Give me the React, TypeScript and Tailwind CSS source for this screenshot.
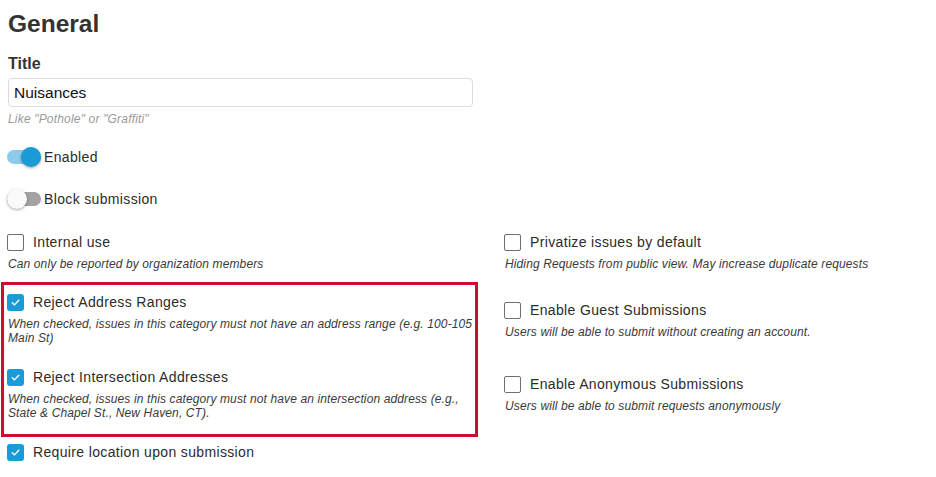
import React from 'react';

const font = { fontFamily: '"Liberation Sans", Arial, sans-serif' };

function Toggle({ on }: { on: boolean }) {
  return (
    <div className="relative w-[34px] h-[20px] shrink-0 flex items-center">
      <div className={`w-[34px] h-[14px] rounded-full ${on ? 'bg-[#8ccbea]' : 'bg-[#a3a3a3]'}`} />
      <div
        className={`absolute top-0 w-[20px] h-[20px] rounded-full shadow-[0_1px_3px_rgba(0,0,0,0.35)] ${
          on ? 'left-[14px] bg-[#1a9ad6]' : 'left-0 bg-[#fafafa]'
        }`}
      />
    </div>
  );
}

function Box({ checked }: { checked: boolean }) {
  if (checked) {
    return (
      <div className="w-[17px] h-[17px] rounded-[3px] bg-[#1a9ad6] flex items-center justify-center shrink-0">
        <svg width="11" height="11" viewBox="0 0 12 12" fill="none">
          <path d="M2.5 6.3 L4.9 8.6 L9.6 3.6" stroke="white" strokeWidth="1.5" strokeLinecap="round" strokeLinejoin="round" />
        </svg>
      </div>
    );
  }
  return <div className="w-[17px] h-[17px] rounded-[2px] border-[1.5px] border-[#6f6f6f] bg-white shrink-0" />;
}

function Option({
  label,
  desc,
  checked = false,
  className = '',
}: {
  label: string;
  desc?: React.ReactNode;
  checked?: boolean;
  className?: string;
}) {
  return (
    <div className={className}>
      <div className="h-[18px] flex items-center -ml-[1px]">
        <Box checked={checked} />
        <span className="ml-[9px] text-[14px] text-[#2b2b2b] tracking-[0.025em] leading-[18px]">{label}</span>
      </div>
      {desc && <p className="mt-[6px] text-[12px] leading-[14px] italic text-[#3a3a3a] tracking-[0.01em]">{desc}</p>}
    </div>
  );
}

export default function App() {
  return (
    <div className="w-[936px] h-[477px] bg-white overflow-hidden" style={font}>
      <div className="pl-[8px] pt-[9px]">
        <h1 className="text-[24.5px] leading-[30px] font-bold text-[#333]">General</h1>
        <h2 className="mt-[15px] text-[16px] leading-[20px] font-bold text-[#333]">Title</h2>
        <div className="mt-[4px] w-[465px] h-[29px] border border-[#dcdcdc] rounded-[4px] flex items-center px-[5px]">
          <span className="text-[15.5px] text-[#111]">Nuisances</span>
        </div>
        <p className="mt-[5px] text-[12px] leading-[14px] italic text-[#9a9a9a] tracking-[0.015em]">Like "Pothole" or "Graffiti"</p>

        <div className="mt-[21px] h-[20px] flex items-center -ml-[1px]">
          <Toggle on />
          <span className="ml-[3px] text-[14px] text-[#2b2b2b] tracking-[0.025em]">Enabled</span>
        </div>
        <div className="mt-[22px] h-[20px] flex items-center -ml-[1px]">
          <Toggle on={false} />
          <span className="ml-[3px] text-[14px] text-[#2b2b2b] tracking-[0.025em]">Block submission</span>
        </div>
      </div>

      <div className="mt-[24px] pl-[8px] flex">
        <div className="w-[467px]">
          <Option label="Internal use" desc="Can only be reported by organization members" />
          <div className="mt-[11px] -ml-[7px] -mr-[3px] border-[3px] border-[#c8102e] pl-[4px] pt-[8px] pb-[14px]">
            <Option
              label="Reject Address Ranges"
              checked
              desc={
                <>
                  When checked, issues in this category must not have an address range (e.g.{' '}
                  <span className="whitespace-nowrap">100-105</span> Main St)
                </>
              }
            />
            <Option
              className="mt-[23px]"
              label="Reject Intersection Addresses"
              checked
              desc="When checked, issues in this category must not have an intersection address (e.g., State & Chapel St., New Haven, CT)."
            />
          </div>
          <Option className="mt-[6px]" label="Require location upon submission" checked />
        </div>
        <div className="ml-[30px] flex-1">
          <Option label="Privatize issues by default" desc="Hiding Requests from public view. May increase duplicate requests" />
          <Option className="mt-[30px]" label="Enable Guest Submissions" desc="Users will be able to submit without creating an account." />
          <Option className="mt-[36px]" label="Enable Anonymous Submissions" desc="Users will be able to submit requests anonymously" />
        </div>
      </div>
    </div>
  );
}
